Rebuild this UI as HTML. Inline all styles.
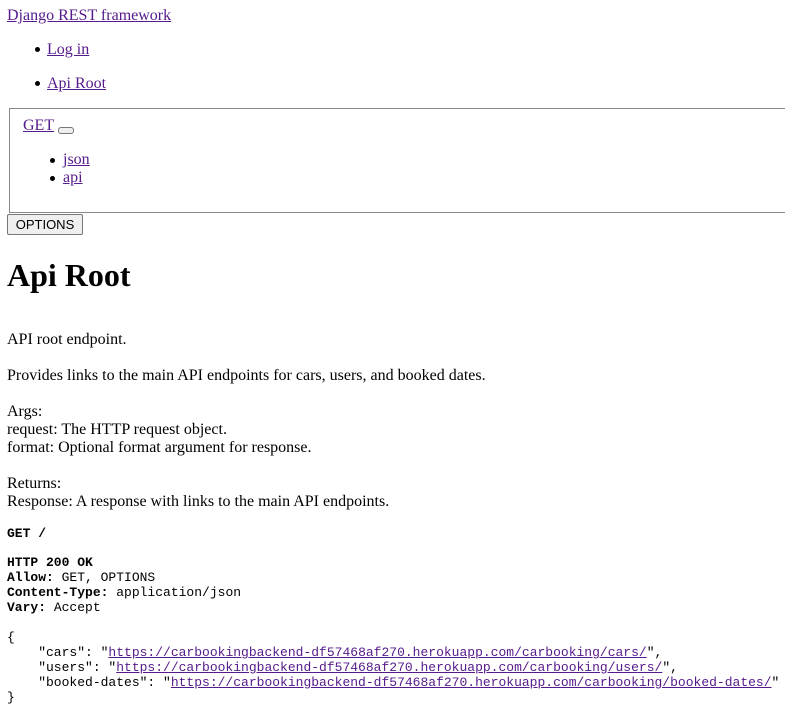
<!DOCTYPE html>
<html><head><meta charset="utf-8"><style>
body{margin:0;width:785px;height:692px;overflow:hidden;position:relative;font-family:"Liberation Serif",serif;font-size:16px;color:#000;background:#fff}
a{color:#551a8b}
.a{position:absolute;white-space:pre;line-height:18px}
.m{font-family:"Liberation Mono",monospace;font-size:13px;line-height:15px}
.b{font-weight:bold}
.dot{position:absolute;width:5px;height:5px;border-radius:50%;background:#000}
</style></head><body>
<div class="a" style="left:7px;top:7px"><a href="#">Django REST framework</a></div>
<div class="dot" style="left:35px;top:47px"></div>
<div class="a" style="left:47px;top:41px"><a href="#">Log in</a></div>
<div class="dot" style="left:35px;top:81px"></div>
<div class="a" style="left:47px;top:75px"><a href="#">Api Root</a></div>
<div style="position:absolute;left:9px;top:108px;width:790px;height:103px;border:1px solid #888;border-right:none"></div>
<div class="a" style="left:23px;top:117px"><a href="#">GET</a></div>
<div style="position:absolute;left:58px;top:127px;width:14px;height:5px;border:1px solid #777;border-radius:3px;background:#eee"></div>
<div class="dot" style="left:50px;top:158px"></div>
<div class="a" style="left:63px;top:151px"><a href="#">json</a></div>
<div class="dot" style="left:50px;top:176px"></div>
<div class="a" style="left:63px;top:169px"><a href="#">api</a></div>
<div style="position:absolute;left:7px;top:214px;width:74px;height:19px;border:1px solid #777;border-radius:2px;background:#efefef;font-family:'Liberation Sans',sans-serif;font-size:13px;line-height:19px;text-align:center">OPTIONS</div>
<div class="a b" style="left:7px;top:256px;font-size:32px;line-height:38px">Api Root</div>
<div class="a" style="left:7px;top:331px">API root endpoint.</div>
<div class="a" style="left:7px;top:367px">Provides links to the main API endpoints for cars, users, and booked dates.</div>
<div class="a" style="left:7px;top:403px">Args:
request: The HTTP request object.
format: Optional format argument for response.</div>
<div class="a" style="left:7px;top:475px">Returns:
Response: A response with links to the main API endpoints.</div>
<div class="a m b" style="left:7px;top:526px">GET /</div>
<div class="a m" style="left:7px;top:555px"><b>HTTP 200 OK</b>
<b>Allow:</b> GET, OPTIONS
<b>Content-Type:</b> application/json
<b>Vary:</b> Accept

{
    "cars": "<a href="#">https://carbookingbackend-df57468af270.herokuapp.com/carbooking/cars/</a>",
    "users": "<a href="#">https://carbookingbackend-df57468af270.herokuapp.com/carbooking/users/</a>",
    "booked-dates": "<a href="#">https://carbookingbackend-df57468af270.herokuapp.com/carbooking/booked-dates/</a>"
}</div>
</body></html>
